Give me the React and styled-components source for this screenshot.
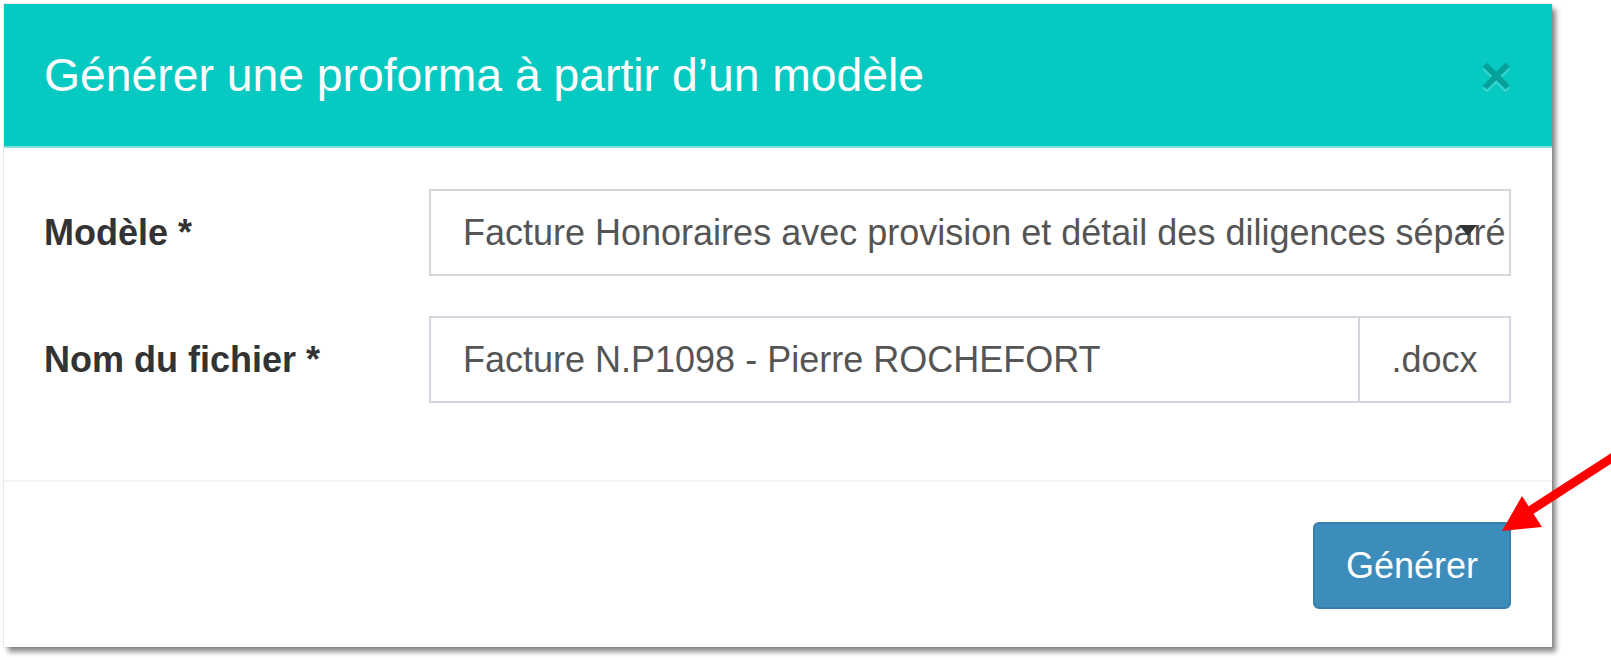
import styled, { createGlobalStyle } from "styled-components";

const GlobalStyle = createGlobalStyle`
	body {
		margin: 0;
		background: #fff;
		font-family: "Liberation Sans", Arial, sans-serif;
	}
	* {
		box-sizing: border-box;
	}
`;

const Page = styled.div`
	position: relative;
	width: 1611px;
	height: 660px;
	padding: 4px;
	overflow: hidden;
`;

const Modal = styled.div`
	width: 1548px;
	background: #fff;
	box-shadow: 0 0 0 1px rgba(0, 0, 0, 0.07), 4px 5px 5px rgba(0, 0, 0, 0.45);
`;

const Header = styled.div`
	height: 144px;
	display: flex;
	align-items: center;
	justify-content: space-between;
	padding: 0 40px;
	background: #06c9c2;
	border-bottom: 2px solid #7fe2de;
`;

const Title = styled.h4`
	margin: 0;
	font-size: 46.3px;
	font-weight: 400;
	line-height: 1;
	color: #fff;
`;

const Close = styled.button`
	border: none;
	background: none;
	padding: 0;
	font-family: "Liberation Sans", Arial, sans-serif;
	font-size: 54px;
	font-weight: 700;
	line-height: 1;
	color: #000;
	opacity: 0.2;
	text-shadow: 0 3px 0 #fff;
`;

const Body = styled.div`
	display: flex;
	flex-direction: column;
	gap: 40px;
	padding: 41px 41px 77px 40px;
`;

const Row = styled.div`
	display: grid;
	grid-template-columns: 385px minmax(0, 1fr);
	align-items: center;
`;

const Label = styled.label`
	font-size: 36px;
	font-weight: 700;
	color: #333;
`;

const Group = styled.div`
	display: flex;
	min-width: 0;
	height: 87px;
`;

const Field = styled.div`
	position: relative;
	flex: 1;
	min-width: 0;
	display: flex;
	align-items: center;
	padding: 0 ${props => props.select ? '0' : '32px'} 0 32px;
	border: 2px solid ${props => props.select ? '#d6d6d6' : '#d2d6de'};
	font-size: 36px;
	line-height: 1;
	color: #555;
	white-space: nowrap;
	overflow: hidden;
`;

const Caret = styled.span`
	position: absolute;
	right: 32px;
	top: 34px;
	width: 0;
	height: 0;
	border-left: 9px solid transparent;
	border-right: 9px solid transparent;
	border-top: 11px solid #333;
`;

const Addon = styled.div`
	width: 151px;
	display: flex;
	align-items: center;
	justify-content: center;
	border: 2px solid #d2d6de;
	border-left: none;
	font-size: 36px;
	color: #555;
`;

const Footer = styled.div`
	display: flex;
	justify-content: flex-end;
	padding: 40px 41px 38px;
	border-top: 2px solid #f4f4f4;
`;

const Button = styled.button`
	width: 198px;
	height: 87px;
	border: 2px solid #367fa9;
	border-radius: 6px;
	background: #3c8dbc;
	color: #fff;
	font-family: "Liberation Sans", Arial, sans-serif;
	font-size: 36px;
`;

const Arrow = styled.svg`
	position: absolute;
	left: 1490px;
	top: 440px;
`;

const App = () => {
	return (
		<>
			<GlobalStyle />
			<Page>
				<Modal>
					<Header>
						<Title>Générer une proforma à partir d’un modèle</Title>
						<Close>×</Close>
					</Header>
					<Body>
						<Row>
							<Label>Modèle *</Label>
							<Group>
								<Field select>
									Facture Honoraires avec provision et détail des diligences séparé
									<Caret />
								</Field>
							</Group>
						</Row>
						<Row>
							<Label>Nom du fichier *</Label>
							<Group>
								<Field>Facture N.P1098 - Pierre ROCHEFORT</Field>
								<Addon>.docx</Addon>
							</Group>
						</Row>
					</Body>
					<Footer>
						<Button>Générer</Button>
					</Footer>
				</Modal>
				<Arrow width="121" height="110" viewBox="0 0 121 110">
					<line x1="128" y1="14" x2="38" y2="72" stroke="#ff0000" strokeWidth="9" />
					<polygon points="12,91 32,56 52,87" fill="#ff0000" />
				</Arrow>
			</Page>
		</>
	);
}

export default App;
